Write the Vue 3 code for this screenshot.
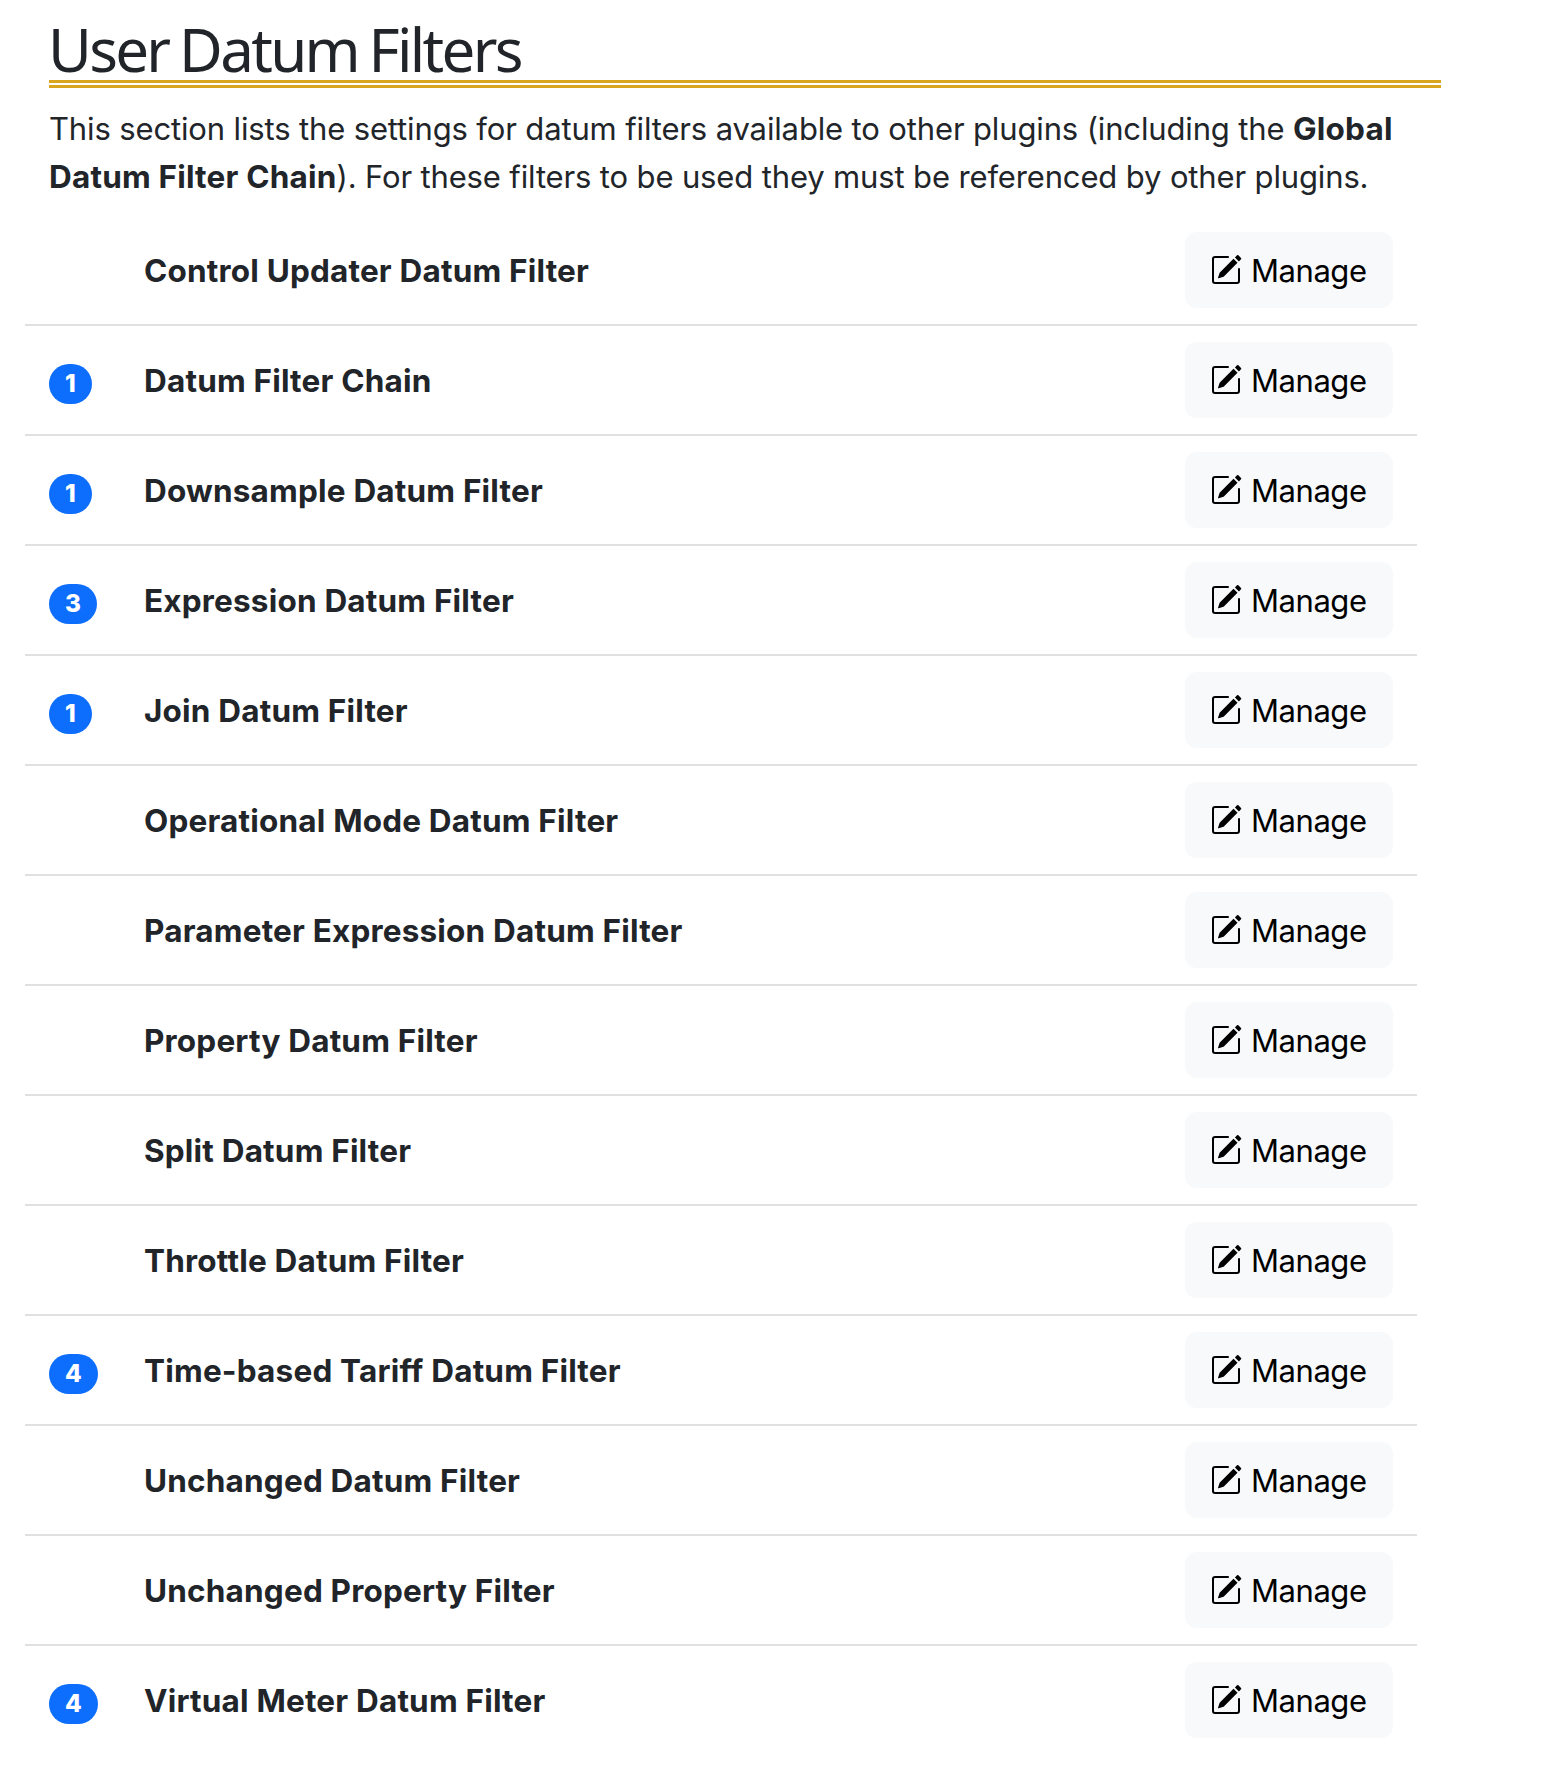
<script setup>
const filters = [
  { name: 'Control Updater Datum Filter' },
  { name: 'Datum Filter Chain', count: 1 },
  { name: 'Downsample Datum Filter', count: 1 },
  { name: 'Expression Datum Filter', count: 3 },
  { name: 'Join Datum Filter', count: 1 },
  { name: 'Operational Mode Datum Filter' },
  { name: 'Parameter Expression Datum Filter' },
  { name: 'Property Datum Filter' },
  { name: 'Split Datum Filter' },
  { name: 'Throttle Datum Filter' },
  { name: 'Time-based Tariff Datum Filter', count: 4 },
  { name: 'Unchanged Datum Filter' },
  { name: 'Unchanged Property Filter' },
  { name: 'Virtual Meter Datum Filter', count: 4 },
]
</script>

<template>
  <main class="page">
    <h2 class="title">User Datum Filters</h2>
    <p class="intro">
      This section lists the settings for datum filters available to other plugins (including the
      <strong>Global<br />Datum Filter Chain</strong>). For these filters to be used they must be referenced by other plugins.
    </p>
    <ul class="list">
      <li v-for="f in filters" :key="f.name" class="row">
        <div class="count"><span v-if="f.count" class="badge">{{ f.count }}</span></div>
        <strong class="name">{{ f.name }}</strong>
        <button type="button" class="manage">
          <svg class="icon" viewBox="0 0 16 16" fill="currentColor" aria-hidden="true">
            <path d="M15.502 1.94a.5.5 0 0 1 0 .706L14.459 3.69l-2-2L13.502.646a.5.5 0 0 1 .707 0l1.293 1.293zm-1.75 2.456-2-2L4.939 9.21a.5.5 0 0 0-.121.196l-.805 2.414a.25.25 0 0 0 .316.316l2.414-.805a.5.5 0 0 0 .196-.12l6.813-6.814z" />
            <path fill-rule="evenodd" d="M1 13.5A1.5 1.5 0 0 0 2.5 15h11a1.5 1.5 0 0 0 1.5-1.5v-6a.5.5 0 0 0-1 0v6a.5.5 0 0 1-.5.5h-11a.5.5 0 0 1-.5-.5v-11a.5.5 0 0 1 .5-.5H9a.5.5 0 0 0 0-1H2.5A1.5 1.5 0 0 0 1 2.5z" />
          </svg>
          <span>Manage</span>
        </button>
      </li>
    </ul>
  </main>
</template>

<style>
body {
  margin: 0;
  background: #fff;
}
</style>

<style scoped>
.page {
  box-sizing: border-box;
  height: 1772px;
  overflow: hidden;
  padding: 20px 109px 0 49px;
  font-family: Inter, "Liberation Sans", sans-serif;
  font-size: 31px;
  line-height: 48px;
  color: #212529;
}
.title {
  box-sizing: border-box;
  height: 68px;
  margin: 0 0 17px;
  border-bottom: 8px double #daa520;
  font-family: "Noto Sans", "Open Sans", sans-serif;
  font-size: 60px;
  font-weight: 400;
  line-height: 58px;
  letter-spacing: -2.7px;
  word-spacing: -2.2px;
  text-indent: -1px;
  white-space: nowrap;
}
.intro {
  margin: 0 0 15px;
  letter-spacing: -0.14px;
  white-space: nowrap;
}
.intro strong,
.name {
  font-size: 31.5px;
  font-weight: 700;
  letter-spacing: 0.19px;
}
.intro strong {
  line-height: 1;
}
.list {
  list-style: none;
  margin: 0 0 0 -24px;
  padding: 0;
  width: 1392px;
}
.row {
  box-sizing: border-box;
  height: 110px;
  padding: 16px 24px;
  display: flex;
  align-items: center;
  border-bottom: 2px solid #dee0e2;
}
.row:last-child {
  border-bottom-color: transparent;
}
.count {
  width: 95px;
  display: flex;
  padding-top: 8px;
}
.badge {
  height: 40px;
  padding: 0 15.9px;
  border-radius: 20px;
  background: #0d6efd;
  color: #fff;
  font-size: 24.3px;
  font-weight: 800;
  line-height: 39px;
}
.name {
  flex: 1;
  padding-top: 1px;
  white-space: nowrap;
}
.manage {
  box-sizing: border-box;
  width: 208px;
  height: 76px;
  padding: 1px 0 0 25px;
  display: flex;
  align-items: center;
  gap: 9px;
  border: 0;
  border-radius: 12px;
  background: #f8f9fa;
  color: #000;
  font: inherit;
  letter-spacing: -0.45px;
}
.icon {
  width: 32px;
  height: 32px;
  margin-top: -2px;
}
</style>
